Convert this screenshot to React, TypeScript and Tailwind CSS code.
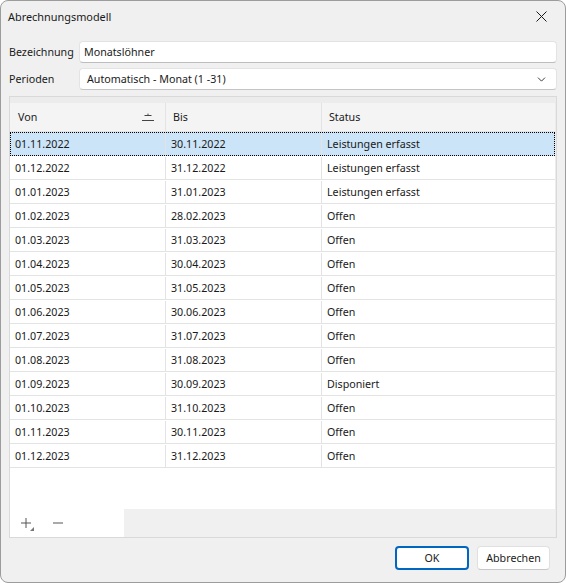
import { ChevronDown } from "lucide-react";

const rows: [string, string, string][] = [
  ["01.11.2022", "30.11.2022", "Leistungen erfasst"],
  ["01.12.2022", "31.12.2022", "Leistungen erfasst"],
  ["01.01.2023", "31.01.2023", "Leistungen erfasst"],
  ["01.02.2023", "28.02.2023", "Offen"],
  ["01.03.2023", "31.03.2023", "Offen"],
  ["01.04.2023", "30.04.2023", "Offen"],
  ["01.05.2023", "31.05.2023", "Offen"],
  ["01.06.2023", "30.06.2023", "Offen"],
  ["01.07.2023", "31.07.2023", "Offen"],
  ["01.08.2023", "31.08.2023", "Offen"],
  ["01.09.2023", "30.09.2023", "Disponiert"],
  ["01.10.2023", "31.10.2023", "Offen"],
  ["01.11.2023", "30.11.2023", "Offen"],
  ["01.12.2023", "31.12.2023", "Offen"],
];

function SortIcon() {
  return (
    <svg width="12" height="9" viewBox="0 0 12 9" className="text-[#444]">
      <path d="M5.5 1.5 L6 0.8 L6.5 1.5" stroke="currentColor" fill="none" strokeWidth="1" />
      <line x1="2.5" y1="2.5" x2="9.5" y2="2.5" stroke="currentColor" strokeWidth="1" />
      <line x1="0" y1="7.5" x2="12" y2="7.5" stroke="currentColor" strokeWidth="1" />
    </svg>
  );
}

export default function App() {
  return (
    <div
      className="w-[566px] h-[583px] bg-white text-[10.7px] text-[#1a1a1a]"
      style={{ fontFamily: '"Segoe UI", "Noto Sans", sans-serif' }}
    >
      <div className="h-full flex flex-col border border-[#9c9c9c] rounded-[8px] bg-[#f0f0f0] overflow-hidden">
        {/* Title bar */}
        <div className="h-[32px] flex items-center justify-between pl-[7px] pr-[18px]">
          <span className="text-[10.9px] leading-none">Abrechnungsmodell</span>
          <svg width="11" height="11" viewBox="0 0 11 11" className="-mt-[1px]">
            <path d="M0.5 0.5 L10.5 10.5 M10.5 0.5 L0.5 10.5" stroke="#1a1a1a" strokeWidth="1" />
          </svg>
        </div>

        {/* Form */}
        <div className="pt-[8px] pb-[6px] pl-[8px] pr-[8px] flex flex-col gap-[5px]">
          <div className="flex items-center">
            <span className="w-[70px]">Bezeichnung</span>
            <div className="flex-1 h-[22px] flex items-center bg-white border border-[#e3e3e3] border-b-[#bdbdbd] rounded-[4px] pl-[4px]">
              Monatslöhner
            </div>
          </div>
          <div className="flex items-center">
            <span className="w-[70px]">Perioden</span>
            <div className="flex-1 h-[22px] flex items-center justify-between bg-white border border-[#e3e3e3] border-b-[#c4c4c4] rounded-[4px] pl-[7px] pr-[8px]">
              <span>Automatisch - Monat (1 -31)</span>
              <ChevronDown size={13} strokeWidth={1.75} className="text-[#333]" />
            </div>
          </div>
        </div>

        {/* Grid container */}
        <div className="flex-1 mx-[8px] border border-[#d9d9d9] bg-[#ececec] pt-[6px] pr-[1px] flex flex-col">
          <div className="flex-1 flex flex-col bg-white">
            <div className="flex h-[29px] bg-[#f4f4f4] border-b border-[#e3e3e3]">
              <div className="w-[156px] border-r border-[#e3e3e3] flex items-center justify-between pl-[8px] pr-[11px]">
                <span>Von</span>
                <SortIcon />
              </div>
              <div className="w-[156px] border-r border-[#e3e3e3] flex items-center pl-[7px]">Bis</div>
              <div className="flex-1 flex items-center pl-[7px]">Status</div>
            </div>
            {rows.map((r, i) => (
              <div
                key={i}
                className={
                  i === 0
                    ? "flex h-[24px] pt-[1px] bg-[#cce4f7] outline-1 outline-dotted outline-black -outline-offset-1"
                    : "flex h-[24px] pt-[1px] border-b border-[#e3e3e3]"
                }
              >
                <div className="w-[156px] border-r border-[#e3e3e3] flex items-center pl-[5px]">{r[0]}</div>
                <div className="w-[156px] border-r border-[#e3e3e3] flex items-center pl-[5px]">{r[1]}</div>
                <div className="flex-1 flex items-center pl-[5px]">{r[2]}</div>
              </div>
            ))}
            <div className="flex-1" />
            <div className="h-[28px] flex">
              <div className="w-[114px] bg-white flex items-center pl-[11px] gap-[22px]">
                <div className="relative w-[10px] h-[10px]">
                  <svg width="10" height="10" viewBox="0 0 10 10">
                    <path d="M5 0 V10 M0 5 H10" stroke="#555" strokeWidth="1" />
                  </svg>
                  <svg width="4" height="4" viewBox="0 0 4 4" className="absolute left-[9px] top-[9px]">
                    <path d="M4 0 L4 4 L0 4 Z" fill="#777" />
                  </svg>
                </div>
                <svg width="10" height="10" viewBox="0 0 10 10">
                  <path d="M0 5 H10" stroke="#555" strokeWidth="1" />
                </svg>
              </div>
              <div className="flex-1 bg-[#f0f0f0]" />
            </div>
          </div>
        </div>

        {/* Buttons */}
        <div className="h-[44px] flex justify-end items-start pt-[8px] pr-[15px] gap-[8px]">
          <button className="w-[74px] h-[24px] rounded-[4px] border-2 border-[#0067c0] bg-white flex items-center justify-center">
            OK
          </button>
          <button className="w-[73px] h-[24px] rounded-[4px] border border-[#e0e0e0] border-b-[#c8c8c8] bg-white flex items-center justify-center">
            Abbrechen
          </button>
        </div>
      </div>
    </div>
  );
}
